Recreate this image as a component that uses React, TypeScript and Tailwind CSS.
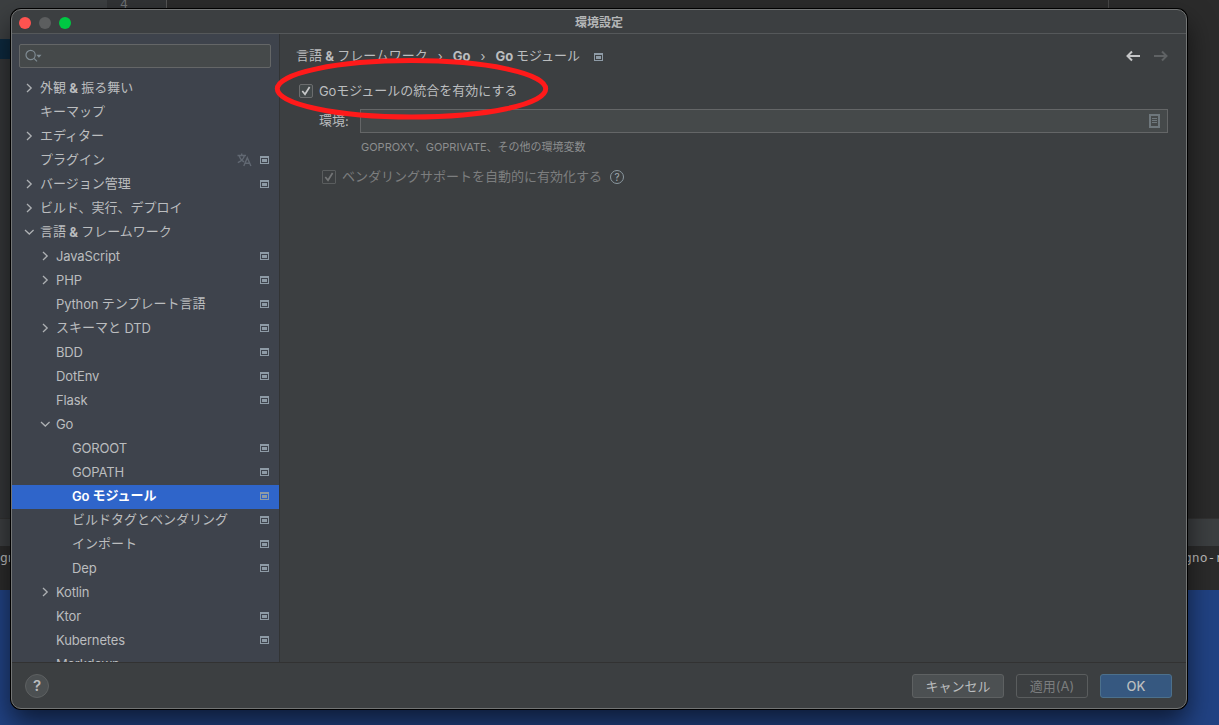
import React from "react";

type Item = {
  label: string;
  level: 0 | 1 | 2;
  arrow?: "right" | "down";
  project?: boolean;
  translate?: boolean;
  selected?: boolean;
};

const items: Item[] = [
  { label: "外観 & 振る舞い", level: 0, arrow: "right" },
  { label: "キーマップ", level: 0 },
  { label: "エディター", level: 0, arrow: "right" },
  { label: "プラグイン", level: 0, project: true, translate: true },
  { label: "バージョン管理", level: 0, arrow: "right", project: true },
  { label: "ビルド、実行、デプロイ", level: 0, arrow: "right" },
  { label: "言語 & フレームワーク", level: 0, arrow: "down" },
  { label: "JavaScript", level: 1, arrow: "right", project: true },
  { label: "PHP", level: 1, arrow: "right", project: true },
  { label: "Python テンプレート言語", level: 1, project: true },
  { label: "スキーマと DTD", level: 1, arrow: "right", project: true },
  { label: "BDD", level: 1, project: true },
  { label: "DotEnv", level: 1, project: true },
  { label: "Flask", level: 1, project: true },
  { label: "Go", level: 1, arrow: "down" },
  { label: "GOROOT", level: 2, project: true },
  { label: "GOPATH", level: 2, project: true },
  { label: "Go モジュール", level: 2, project: true, selected: true },
  { label: "ビルドタグとベンダリング", level: 2, project: true },
  { label: "インポート", level: 2, project: true },
  { label: "Dep", level: 2, project: true },
  { label: "Kotlin", level: 1, arrow: "right" },
  { label: "Ktor", level: 1, project: true },
  { label: "Kubernetes", level: 1, project: true },
  { label: "Markdown", level: 1 },
];

const indent = { 0: "pl-3", 1: "pl-[28px]", 2: "pl-[44px]" };

/* Latin runs are set slightly tighter; Japanese runs sit one pixel higher. */
function Txt({ children, latin = "" }: { children: string; latin?: string }) {
  return (
    <>
      {children
        .split(/([A-Za-z&(): -]+)/)
        .filter(Boolean)
        .map((part, i) =>
          /^[A-Za-z&(): -]+$/.test(part) ? (
            <span
              key={i}
              className={part.includes("&") ? "font-bold tracking-[0.1px]" : `tracking-[-0.15px] ${latin}`}
            >
              {part}
            </span>
          ) : (
            <span key={i} className="align-[1px] leading-none">
              {part}
            </span>
          ),
        )}
    </>
  );
}

function Chevron({ dir }: { dir: "right" | "down" }) {
  return (
    <svg width="10" height="10" viewBox="0 0 10 10" fill="none" stroke="#adb0b3" strokeWidth="1.3">
      {dir === "right" ? <path d="M3 1 L7.2 5 L3 9" /> : <path d="M1 3 L5.3 7 L9.6 3" />}
    </svg>
  );
}

function ProjectIcon() {
  return (
    <svg width="9" height="8" viewBox="0 0 9 8" shapeRendering="crispEdges">
      <path fill="#8e9ba6" fillRule="evenodd" d="M0 0h9v8H0zM1 2v5h7V2z" />
      <path fill="#8e9ba6" d="M2 3h5v3H2z" />
    </svg>
  );
}

function TranslateIcon() {
  return (
    <svg width="15" height="14" viewBox="0 0 15 14" fill="none" stroke="#616872" strokeWidth="1.4">
      <path d="M0.5 2.5H9M4.7 0.5V2.5M2.2 2.8C3.2 6 5.2 8 7.2 8.8M7.4 2.8C6.4 6.2 3.6 8.6 0.8 9.6" />
      <path d="M6.8 13L10.3 4.8L13.9 13M8 10.3H12.6" />
    </svg>
  );
}

function Check({ color }: { color: string }) {
  return (
    <svg width="10" height="10" viewBox="0 0 10 10" fill="none" stroke={color} strokeWidth="1.7">
      <path d="M1.3 5 L4 8.2 L8.6 1" />
    </svg>
  );
}

function Row({ item }: { item: Item }) {
  return (
    <div
      className={`flex h-6 shrink-0 items-center pb-[2px] pr-[10px] ${indent[item.level]} ${
        item.selected ? "bg-[#2f65ca] font-bold text-white" : "text-[#bbbdbf]"
      }`}
    >
      <div className="flex w-4 shrink-0">{item.arrow && <Chevron dir={item.arrow} />}</div>
      <div className="grow whitespace-nowrap">
        <Txt latin={item.selected ? "font-semibold" : ""}>{item.label}</Txt>
      </div>
      {item.translate && (
        <div className="mr-2">
          <TranslateIcon />
        </div>
      )}
      {item.project && <ProjectIcon />}
    </div>
  );
}

function Backdrop() {
  return (
    <div className="flex h-full flex-col bg-[#2b2b2b]">
      <div className="flex h-[518px] shrink-0">
        <div className="flex w-[107px] flex-col bg-[#343638]">
          <div className="h-[39px] bg-[#3c3f41]" />
          <div className="h-5 bg-[#0d293e]" />
        </div>
        <div className="w-[60px] border-r border-[#555] bg-[#313335] pl-[13px] font-['Liberation_Mono'] text-[13px] leading-[9px] text-[#707376]">
          4
        </div>
        <div className="w-[942px] border-r border-[#484848]" />
      </div>
      <div className="h-7 shrink-0 border-t border-[#323232] bg-[#3c3f41]" />
      <div className="flex h-11 shrink-0 justify-between overflow-hidden whitespace-nowrap pt-1 font-['DejaVu_Sans_Mono'] text-[13px] leading-4 text-[#bbb]">
        <span>gno-r</span>
        <span className="w-[35px]">gno-r</span>
      </div>
      <div className="grow bg-[#214283]" />
    </div>
  );
}

export default function App() {
  return (
    <div className="relative h-[725px] w-[1219px] overflow-hidden font-[Inter,'Noto_Sans_CJK_JP',sans-serif] text-[13px] leading-6">
      <Backdrop />
      <div className="absolute left-[11px] top-[9px] flex h-[700px] w-[1176px] flex-col overflow-hidden rounded-[10px] border border-[#737575] bg-[#3c3f41] shadow-[0_0_0_1px_#000,0_14px_28px_rgba(0,0,0,0.6)]">
        <header className="grid h-6 shrink-0 grid-cols-3 items-center border-b border-[#55585a]">
          <div className="flex gap-2 pl-[7px] pt-px">
            <span className="h-3 w-3 rounded-full bg-[#ff5350]" />
            <span className="h-3 w-3 rounded-full bg-[#5c5e5f]" />
            <span className="h-3 w-3 rounded-full bg-[#00c843]" />
          </div>
          <div className="pt-0.5 text-center text-[12px] font-bold leading-[22px] text-[#b4b6b7]">環境設定</div>
        </header>

        <div className="flex min-h-0 grow">
          <aside className="flex w-[268px] shrink-0 flex-col overflow-hidden border-r border-[#323435] bg-[#3e434c]">
            <div className="ml-[7px] mr-2 mb-[9px] mt-[10px] flex h-6 shrink-0 items-center rounded-[2px] border border-[#646667] bg-[#45494a] pl-[5px]">
              <svg width="17" height="14" viewBox="0 0 17 14" fill="none" stroke="#7f8b93" strokeWidth="1.2">
                <circle cx="5.6" cy="6" r="4.6" />
                <path d="M9 9.3 L12 12.4" />
                <path d="M11.3 5.8h5.2l-2.6 3z" fill="#7f8b93" stroke="none" />
              </svg>
            </div>
            {items.map((item) => (
              <Row key={item.label} item={item} />
            ))}
          </aside>

          <main className="flex grow flex-col pl-4 pr-[18px] text-[#bbbdbf]">
            <div className="mt-[10px] flex h-6 items-center">
              <div className="flex grow items-center whitespace-nowrap">
                <span><Txt>言語 & フレームワーク</Txt></span>
                <span className="w-[25px] text-center">›</span>
                <span className="font-bold">Go</span>
                <span className="w-[25px] text-center">›</span>
                <span className="mr-[14px]"><Txt latin="font-bold">Go モジュール</Txt></span>
                <div className="pt-px">
                  <ProjectIcon />
                </div>
              </div>
              <svg width="42" height="12" viewBox="0 0 42 12" fill="none" strokeWidth="2">
                <path stroke="#c5c6c7" d="M14 6H2M6 1.5L1.5 6L6 10.5" />
                <path stroke="#5f6264" d="M28 6H40M36 1.5L40.5 6L36 10.5" />
              </svg>
            </div>

            <div className="mt-[11px] flex h-6 items-center pl-[3px]">
              <span className="mr-1.5 flex h-[14px] w-[14px] items-center justify-center rounded-[2px] border border-[#6b6d6e] bg-[#43494a]">
                <Check color="#c8c9ca" />
              </span>
              <div><Txt>Goモジュールの統合を有効にする</Txt></div>
            </div>

            <div className="mt-[6px] flex h-6 items-center pl-[23px]">
              <span className="w-[41px] shrink-0"><Txt>環境:</Txt></span>
              <div className="flex h-6 grow items-center justify-end border border-[#646667] bg-[#45494a] pr-[7px]">
                <svg width="11" height="14" viewBox="0 0 11 14" fill="none" stroke="#6e777c" shapeRendering="crispEdges">
                  <path strokeWidth="2" d="M1 1h9v12H1z" />
                  <path d="M3 4.5h5M3 6.5h5M3 8.5h5" />
                </svg>
              </div>
            </div>
            <div className="mt-[3px] h-[22px] pl-[65px] text-[11px] leading-[22px] text-[#8c8e8f]">
              GOPROXY、GOPRIVATE、その他の環境変数
            </div>
            <div className="mt-[7px] flex h-6 items-center pl-[26px] text-[#7c7e7f]">
              <span className="mr-1.5 flex h-[14px] w-[14px] items-center justify-center rounded-[1px] border border-[#5a5d5e]">
                <Check color="#737576" />
              </span>
              <span><Txt>ベンダリングサポートを自動的に有効化する</Txt></span>
              <span className="ml-2 flex h-[14px] w-[14px] items-center justify-center rounded-full border border-[#8b989f] text-[10px] leading-none text-[#a0abb1]">
                ?
              </span>
            </div>
          </main>
        </div>

        <footer className="flex h-[46px] shrink-0 items-center border-t border-[#323232] pl-[13px] pr-[14px] text-[#bbbdbf]">
          <div className="flex h-6 w-6 items-center justify-center rounded-full border border-[#5e6162] bg-[#4c5052] text-[15px] font-semibold">
            ?
          </div>
          <div className="flex grow justify-end gap-3 leading-[22px]">
            <button className="h-6 w-[92px] rounded-[3px] border border-[#5e6162] bg-[#4c5052]">キャンセル</button>
            <button className="h-6 w-[72px] rounded-[3px] border border-[#5a5d5e] text-[#7b7d7e]">適用(A)</button>
            <button className="h-6 w-[72px] rounded-[3px] border border-[#4c708c] bg-[#365880] font-medium">OK</button>
          </div>
        </footer>
      </div>

      <svg className="pointer-events-none absolute left-[270px] top-[50px]" width="285" height="78" viewBox="0 0 285 78" fill="none">
        <ellipse cx="141.5" cy="38.8" rx="134.2" ry="28.2" stroke="#ff1a1a" strokeWidth="5" />
      </svg>
    </div>
  );
}
